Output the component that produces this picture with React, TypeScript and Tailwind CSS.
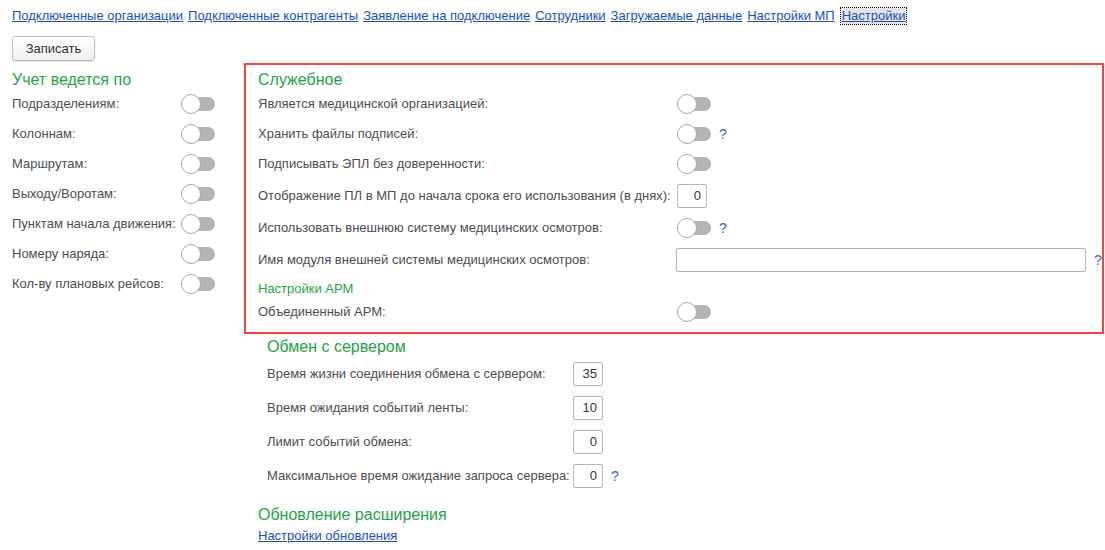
import React from 'react';

const font = { fontFamily: '"Liberation Sans", Arial, sans-serif' };

function Toggle() {
  return (
    <div className="relative w-[34px] h-[20px] shrink-0">
      <div className="absolute left-[8px] right-0 top-[3px] h-[14px] rounded-full bg-[#b4b4b4]" />
      <div className="absolute left-0 top-0 w-[20px] h-[20px] rounded-full bg-white border border-[#a6a6a6]" />
    </div>
  );
}

function Help() {
  return <span className="text-[#1f6fc5] text-[14px] ml-[8px]">?</span>;
}

function NumInput({ value }: { value: string }) {
  return (
    <div className="w-[30px] h-[24px] border border-[#b5b5b5] rounded-[2px] bg-white flex items-center justify-end pr-[5px] text-[13px] text-[#333]">
      {value}
    </div>
  );
}

const links = [
  'Подключенные организации',
  'Подключенные контрагенты',
  'Заявление на подключение',
  'Сотрудники',
  'Загружаемые данные',
  'Настройки МП',
];

const accounting = [
  'Подразделениям:',
  'Колоннам:',
  'Маршрутам:',
  'Выходу/Воротам:',
  'Пунктам начала движения:',
  'Номеру наряда:',
  'Кол-ву плановых рейсов:',
];

const exchange = [
  { label: 'Время жизни соединения обмена с сервером:', value: '35' },
  { label: 'Время ожидания событий ленты:', value: '10' },
  { label: 'Лимит событий обмена:', value: '0' },
  { label: 'Максимальное время ожидание запроса сервера:', value: '0', help: true },
];

export default function App() {
  return (
    <div className="w-[1105px] h-[550px] bg-white text-[13px] text-[#4d4d4d] overflow-hidden" style={font}>
      {/* вкладки */}
      <div className="flex items-center gap-[5px] pl-[12px] pt-[8px] h-[24px]">
        {links.map((l) => (
          <span key={l} className="text-[#1c4ec4] underline leading-[16px] whitespace-nowrap">
            {l}
          </span>
        ))}
        <span className="text-[#1c4ec4] underline leading-[16px] bg-[#e4e4e4] outline-1 outline-dotted outline-black px-[1px] ml-[1px]">
          Настройки
        </span>
      </div>

      <div className="pl-[12px] pt-[12px]">
        <button className="w-[83px] h-[25px] border border-[#bdbdbd] rounded-[3px] bg-gradient-to-b from-white to-[#f0f0f0] shadow-[0_1px_1px_rgba(0,0,0,0.12)] text-[13px] text-[#333]">
          Записать
        </button>
      </div>

      <div className="flex mt-[2px]">
        {/* учет ведется по */}
        <div className="w-[244px] pl-[12px] pt-[7px]">
          <div className="text-[16px] text-[#1fa24a] h-[19px] leading-[19px]">Учет ведется по</div>
          {accounting.map((a) => (
            <div key={a} className="flex items-center h-[30px]">
              <span className="w-[169px] whitespace-nowrap">{a}</span>
              <Toggle />
            </div>
          ))}
        </div>

        <div className="flex flex-col">
          {/* служебное */}
          <div className="w-[860px] h-[271px] border-2 border-[#f04545] pl-[12px] pt-[5px]">
            <div className="text-[16px] text-[#1fa24a] h-[19px] leading-[19px]">Служебное</div>
            <div className="flex items-center h-[30px]">
              <span className="w-[419px]">Является медицинской организацией:</span>
              <Toggle />
            </div>
            <div className="flex items-center h-[30px]">
              <span className="w-[419px]">Хранить файлы подписей:</span>
              <Toggle />
              <Help />
            </div>
            <div className="flex items-center h-[30px]">
              <span className="w-[419px]">Подписывать ЭПЛ без доверенности:</span>
              <Toggle />
            </div>
            <div className="flex items-center h-[34px]">
              <span className="w-[419px] whitespace-nowrap">
                Отображение ПЛ в МП до начала срока его использования (в днях):
              </span>
              <NumInput value="0" />
            </div>
            <div className="flex items-center h-[30px]">
              <span className="w-[419px]">Использовать внешнюю систему медицинских осмотров:</span>
              <Toggle />
              <Help />
            </div>
            <div className="flex items-center h-[34px]">
              <span className="w-[418px]">Имя модуля внешней системы медицинских осмотров:</span>
              <div className="w-[410px] h-[24px] border border-[#b5b5b5] rounded-[2px] bg-white" />
              <Help />
            </div>
            <div className="text-[#1fa24a] h-[24px] flex items-center">Настройки АРМ</div>
            <div className="flex items-center h-[22px]">
              <span className="w-[419px]">Объединенный АРМ:</span>
              <Toggle />
            </div>
          </div>

          {/* обмен с сервером */}
          <div className="pl-[23px] pt-[3px]">
            <div className="text-[16px] text-[#1fa24a] h-[20px] leading-[20px]">Обмен с сервером</div>
            {exchange.map((e) => (
              <div key={e.label} className="flex items-center h-[34px]">
                <span className="w-[306px] whitespace-nowrap">{e.label}</span>
                <NumInput value={e.value} />
                {e.help && <Help />}
              </div>
            ))}
          </div>

          {/* обновление */}
          <div className="pl-[14px] pt-[12px]">
            <div className="text-[16px] text-[#1fa24a] h-[20px] leading-[20px]">Обновление расширения</div>
            <div className="text-[#1c4ec4] underline mt-[1px]">Настройки обновления</div>
          </div>
        </div>
      </div>
    </div>
  );
}
